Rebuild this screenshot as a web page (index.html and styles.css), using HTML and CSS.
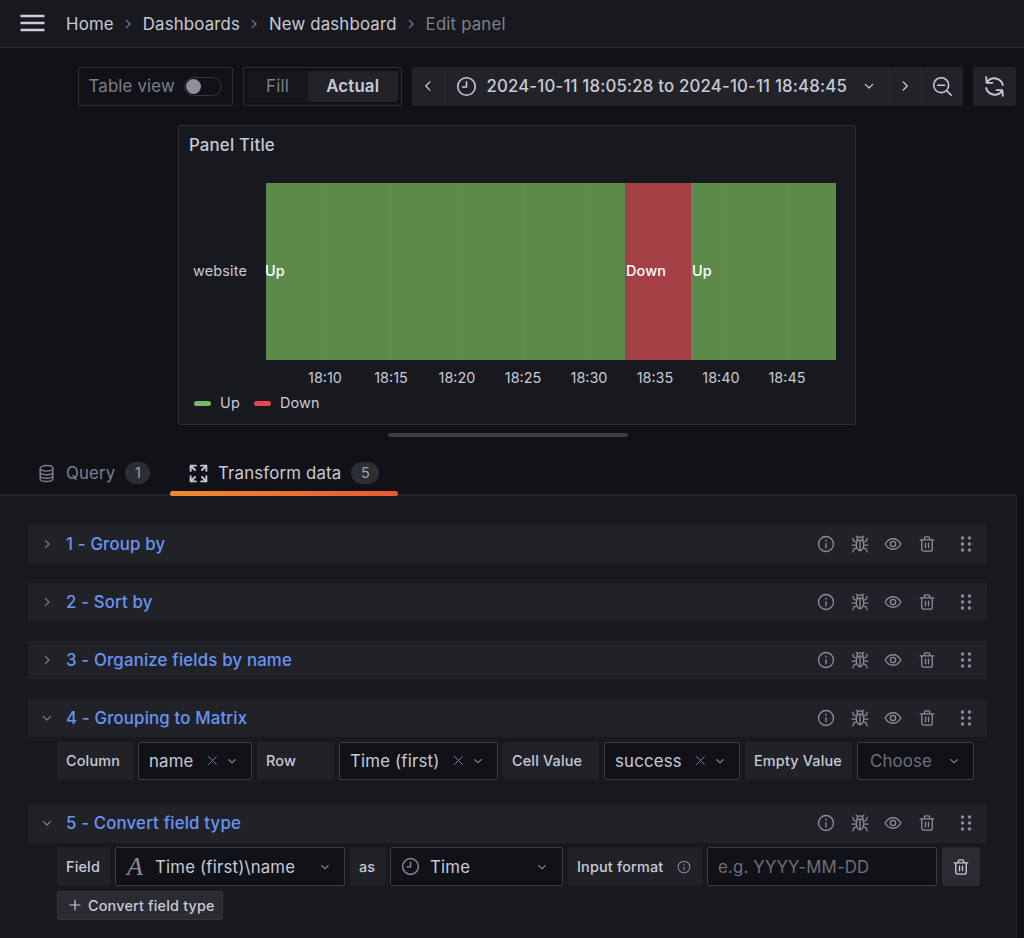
FILE: index.html
```html
<!DOCTYPE html>
<html lang="en">
  <head>
    <meta charset="UTF-8" />
    <title>Edit panel</title>
    <link rel="stylesheet" href="styles.css">
  </head>
  <body>
    <svg class="sprite" width="0" height="0">
      <symbol id="i-info" viewBox="0 0 24 24"><circle cx="12" cy="12" r="10"/><path d="M12 11.500v5.500M12 7v1"/></symbol>
      <symbol id="i-bug" viewBox="0 0 24 24"><path d="M7 13c0-3.500 2-6.500 5-6.500s5 3 5 6.500-2 8-5 8-5-4.500-5-8zM8 8V6.500a4 4 0 0 1 8 0V8M12 7v14M8.500 3 7 1.500M15.500 3 17 1.500M7.500 10 3.500 8 2.500 4.500M16.500 10l4-2 1-3.500M7 13.500H1.500M17 13.500h5.500M7.500 17l-3.500 1.500L2.500 22.500M16.500 17l3.500 1.500 1.500 4"/></symbol>
      <symbol id="i-eye" viewBox="0 0 24 24"><path d="M1.500 12C4 7.500 7.500 5 12 5s8 2.500 10.500 7C20 16.500 16.500 19 12 19S4 16.500 1.500 12z"/><circle cx="12" cy="12" r="3.500"/></symbol>
      <symbol id="i-trash" viewBox="0 0 24 24"><path d="M3 6.500h18M8.500 6.500V4a1.500 1.500 0 0 1 1.500-1.500h4A1.500 1.500 0 0 1 15.500 4v2.500M5 6.500V19a2.500 2.500 0 0 0 2.500 2.500h9A2.500 2.500 0 0 0 19 19V6.500M10 11v6M14 11v6"/></symbol>
      <symbol id="i-chev-down" viewBox="0 0 24 24"><path d="M6.500 9.500 12 15l5.500-5.500"/></symbol>
      <symbol id="i-chev-right" viewBox="0 0 24 24"><path d="M9.500 6.500 15 12l-5.500 5.500"/></symbol>
      <symbol id="i-chev-left" viewBox="0 0 24 24"><path d="M14.500 6.500 9 12l5.500 5.500"/></symbol>
      <symbol id="i-x" viewBox="0 0 24 24"><path d="M5.500 5.500l13 13M18.500 5.500l-13 13"/></symbol>
      <symbol id="i-clock" viewBox="0 0 24 24"><circle cx="12" cy="12" r="10"/><path d="M12 6.500V12.500H7.500"/></symbol>
      <symbol id="i-grip" viewBox="0 0 12 16"><circle cx="2.500" cy="2" r="1.700"/><circle cx="9.500" cy="2" r="1.700"/><circle cx="2.500" cy="8" r="1.700"/><circle cx="9.500" cy="8" r="1.700"/><circle cx="2.500" cy="14" r="1.700"/><circle cx="9.500" cy="14" r="1.700"/></symbol>
    </svg>

    <header class="topbar">
      <svg class="burger" viewBox="0 0 24 18"><path d="M0 2h24M0 9h24M0 16h24"/></svg>
      <nav class="crumbs">
        <span>Home</span>
        <svg class="ico crumb-sep"><use href="#i-chev-right"/></svg>
        <span>Dashboards</span>
        <svg class="ico crumb-sep"><use href="#i-chev-right"/></svg>
        <span>New dashboard</span>
        <svg class="ico crumb-sep"><use href="#i-chev-right"/></svg>
        <span class="crumb-current">Edit panel</span>
      </nav>
    </header>

    <div class="toolbar">
      <div class="table-view">
        <span>Table view</span>
        <span class="switch"><span class="knob"></span></span>
      </div>
      <div class="radio">
        <span class="radio-opt">Fill</span>
        <span class="radio-opt radio-on">Actual</span>
      </div>
      <div class="time-group">
        <span class="time-btn time-arrow"><svg class="ico ico-18"><use href="#i-chev-left"/></svg></span>
        <span class="time-btn time-range">
          <svg class="ico ico-clock"><use href="#i-clock"/></svg>
          <span class="time-text">2024-10-11 18:05:28 to 2024-10-11 18:48:45</span>
          <svg class="ico ico-16"><use href="#i-chev-down"/></svg>
        </span>
        <span class="time-btn time-arrow"><svg class="ico ico-18"><use href="#i-chev-right"/></svg></span>
        <span class="time-btn time-zoom">
          <svg class="ico" viewBox="0 0 24 24"><circle cx="10.500" cy="10.500" r="8.500"/><path d="M6.500 10.500h8M17 17l5 5"/></svg>
        </span>
      </div>
      <span class="refresh">
        <svg class="ico" viewBox="0 0 24 24"><path d="M20 10.500A8.500 8.500 0 0 0 5 7.500M4 3l.5 5.500H10M4 13.500a8.500 8.500 0 0 0 15 3M20 21l-.5-5.500H14"/></svg>
      </span>
    </div>

    <section class="panel">
      <h2 class="panel-title">Panel Title</h2>
      <div class="chart">
        <div class="series-name">website</div>
        <div class="plot">
          <div class="seg seg-up seg-a">Up</div>
          <div class="seg seg-down seg-b">Down</div>
          <div class="seg seg-up seg-c">Up</div>
        </div>
      </div>
      <div class="ticks">
        <span>18:10</span><span>18:15</span><span>18:20</span><span>18:25</span><span>18:30</span><span>18:35</span><span>18:40</span><span>18:45</span>
      </div>
      <div class="legend">
        <i class="swatch swatch-up"></i><span>Up</span>
        <i class="swatch swatch-down"></i><span>Down</span>
      </div>
    </section>

    <div class="handle"></div>

    <div class="tabs">
      <div class="tab tab-query">
        <svg class="ico ico-db" viewBox="0 0 24 24"><ellipse cx="12" cy="5.500" rx="8" ry="3.500"/><path d="M4 5.500v13c0 2 3.600 3.500 8 3.500s8-1.500 8-3.500v-13M4 10c0 2 3.600 3.500 8 3.500s8-1.500 8-3.500M4 14.500c0 2 3.600 3.500 8 3.500s8-1.500 8-3.500"/></svg>
        <span>Query</span>
        <span class="count">1</span>
      </div>
      <div class="tab tab-active">
        <svg class="ico ico-process" viewBox="0 0 24 24"><path d="M3 9V3h6M3 3l5 5M15 3h6v6M21 3l-5 5M21 15v6h-6M21 21l-5-5M9 21H3v-6M3 21l5-5"/></svg>
        <span>Transform data</span>
        <span class="count">5</span>
      </div>
    </div>

    <main class="pane">
      <div class="row">
        <div class="row-head">
          <svg class="ico ico-16 row-chev"><use href="#i-chev-right"/></svg>
          <span class="row-title">1 - Group by</span>
          <div class="row-actions">
            <svg class="ico ico-18"><use href="#i-info"/></svg>
            <svg class="ico ico-18"><use href="#i-bug"/></svg>
            <svg class="ico ico-18"><use href="#i-eye"/></svg>
            <svg class="ico ico-18"><use href="#i-trash"/></svg>
            <svg class="grip"><use href="#i-grip"/></svg>
          </div>
        </div>
      </div>

      <div class="row">
        <div class="row-head">
          <svg class="ico ico-16 row-chev"><use href="#i-chev-right"/></svg>
          <span class="row-title">2 - Sort by</span>
          <div class="row-actions">
            <svg class="ico ico-18"><use href="#i-info"/></svg>
            <svg class="ico ico-18"><use href="#i-bug"/></svg>
            <svg class="ico ico-18"><use href="#i-eye"/></svg>
            <svg class="ico ico-18"><use href="#i-trash"/></svg>
            <svg class="grip"><use href="#i-grip"/></svg>
          </div>
        </div>
      </div>

      <div class="row">
        <div class="row-head">
          <svg class="ico ico-16 row-chev"><use href="#i-chev-right"/></svg>
          <span class="row-title">3 - Organize fields by name</span>
          <div class="row-actions">
            <svg class="ico ico-18"><use href="#i-info"/></svg>
            <svg class="ico ico-18"><use href="#i-bug"/></svg>
            <svg class="ico ico-18"><use href="#i-eye"/></svg>
            <svg class="ico ico-18"><use href="#i-trash"/></svg>
            <svg class="grip"><use href="#i-grip"/></svg>
          </div>
        </div>
      </div>

      <div class="row row-open">
        <div class="row-head">
          <svg class="ico ico-16 row-chev"><use href="#i-chev-down"/></svg>
          <span class="row-title">4 - Grouping to Matrix</span>
          <div class="row-actions">
            <svg class="ico ico-18"><use href="#i-info"/></svg>
            <svg class="ico ico-18"><use href="#i-bug"/></svg>
            <svg class="ico ico-18"><use href="#i-eye"/></svg>
            <svg class="ico ico-18"><use href="#i-trash"/></svg>
            <svg class="grip"><use href="#i-grip"/></svg>
          </div>
        </div>
        <div class="fields">
          <span class="lbl w-column">Column</span>
          <span class="sel w-name"><span class="sel-val">name</span><svg class="ico ico-x"><use href="#i-x"/></svg><svg class="ico ico-14"><use href="#i-chev-down"/></svg></span>
          <span class="lbl w-rowlbl">Row</span>
          <span class="sel w-time"><span class="sel-val">Time (first)</span><svg class="ico ico-x"><use href="#i-x"/></svg><svg class="ico ico-14"><use href="#i-chev-down"/></svg></span>
          <span class="lbl w-cell">Cell Value</span>
          <span class="sel w-success"><span class="sel-val">success</span><svg class="ico ico-x"><use href="#i-x"/></svg><svg class="ico ico-14"><use href="#i-chev-down"/></svg></span>
          <span class="lbl w-empty">Empty Value</span>
          <span class="sel w-choose"><span class="sel-val sel-ph">Choose</span><svg class="ico ico-14"><use href="#i-chev-down"/></svg></span>
        </div>
      </div>

      <div class="row row-open">
        <div class="row-head">
          <svg class="ico ico-16 row-chev"><use href="#i-chev-down"/></svg>
          <span class="row-title">5 - Convert field type</span>
          <div class="row-actions">
            <svg class="ico ico-18"><use href="#i-info"/></svg>
            <svg class="ico ico-18"><use href="#i-bug"/></svg>
            <svg class="ico ico-18"><use href="#i-eye"/></svg>
            <svg class="ico ico-18"><use href="#i-trash"/></svg>
            <svg class="grip"><use href="#i-grip"/></svg>
          </div>
        </div>
        <div class="fields">
          <span class="lbl w-field">Field</span>
          <span class="sel w-fieldsel"><span class="type-a">A</span><span class="sel-val">Time (first)\name</span><svg class="ico ico-14"><use href="#i-chev-down"/></svg></span>
          <span class="lbl w-as">as</span>
          <span class="sel w-type"><svg class="ico ico-type"><use href="#i-clock"/></svg><span class="sel-val">Time</span><svg class="ico ico-14"><use href="#i-chev-down"/></svg></span>
          <span class="lbl w-format">Input format<svg class="ico ico-14 lbl-info"><use href="#i-info"/></svg></span>
          <span class="sel w-input"><span class="sel-val sel-ph">e.g. YYYY-MM-DD</span></span>
          <span class="del-btn"><svg class="ico ico-18"><use href="#i-trash"/></svg></span>
        </div>
        <div class="add-btn">
          <svg class="ico ico-12" viewBox="0 0 24 24"><path d="M12 2v20M2 12h20"/></svg>
          <span>Convert field type</span>
        </div>
      </div>
    </main>
  </body>
</html>
```

FILE: styles.css
```css
* {
  box-sizing: border-box;
}
html,
body {
  height: 938px;
  overflow: hidden;
}
body {
  margin: 0;
  background: #111217;
  color: #ccccdc;
  font-family: Inter, "Noto Sans", sans-serif;
  font-size: 16.8px;
  letter-spacing: 0.01071em;
}
.sprite {
  display: block;
  height: 0;
}
.ico {
  width: 18px;
  height: 18px;
  fill: none;
  stroke: currentColor;
  stroke-width: 1.8;
  stroke-linecap: round;
  stroke-linejoin: round;
  flex: none;
}
.ico-12 {
  width: 12px;
  height: 12px;
  stroke-width: 2.4;
}
.ico-14 {
  width: 14px;
  height: 14px;
}
.ico-16 {
  width: 16px;
  height: 16px;
}
.ico-18 {
  width: 18px;
  height: 18px;
}
.ico-clock {
  width: 21px;
  height: 21px;
}
.ico-type {
  width: 19px;
  height: 19px;
}
.ico-db {
  width: 19px;
  height: 19px;
}
.ico-process {
  width: 21px;
  height: 21px;
  stroke-width: 2.2;
}

.topbar {
  height: 48px;
  background: #17191e;
  border-bottom: 1px solid #2a2c32;
  display: flex;
  align-items: center;
  padding-left: 20px;
}
.burger {
  width: 25px;
  height: 18px;
  fill: none;
  stroke: #ccccdc;
  stroke-width: 2.4;
  margin-top: -1px;
}
.crumbs {
  display: flex;
  align-items: center;
  margin-left: 21px;
  color: #c9c9d6;
}
.crumb-sep {
  width: 16px;
  height: 16px;
  margin: 0 6.500px;
  color: #7e7e8c;
}
.crumb-current {
  color: #7e7f8b;
}

.toolbar {
  display: flex;
  align-items: stretch;
  height: 38.4px;
  margin: 19.2px 0 0 77.5px;
}
.table-view {
  width: 155.500px;
  display: flex;
  align-items: center;
  padding-left: 10px;
  border: 1px solid #2d2f35;
  border-radius: 2px;
  color: #7e7f8b;
}
.switch {
  width: 38px;
  height: 19px;
  margin-left: 9px;
  border: 1px solid #35373d;
  border-radius: 10px;
  display: flex;
  align-items: center;
  padding-left: 1px;
}
.knob {
  width: 15px;
  height: 15px;
  border-radius: 50%;
  background: #8f8f9c;
}
.radio {
  width: 158.500px;
  margin-left: 10px;
  padding: 3px;
  display: flex;
  border: 1px solid #2d2f35;
  border-radius: 2px;
  color: #7e7f8b;
}
.radio-opt {
  flex: 1;
  display: flex;
  align-items: center;
  justify-content: center;
  background: #15171b;
}
.radio-opt:first-child {
  flex: none;
  width: 61px;
}
.radio-on {
  background: #212329;
  color: #c9c9d6;
  font-weight: 600;
  border-radius: 2px;
}
.time-group {
  display: flex;
  margin-left: 10.500px;
  width: 550.500px;
  background: #212329;
  border-radius: 2px;
  color: #c9c9d6;
}
.time-btn {
  display: flex;
  align-items: center;
  justify-content: center;
  border-left: 1px solid #2a2c32;
}
.time-btn:first-child {
  border-left: 0;
}
.time-arrow {
  width: 32.400px;
}
.time-range {
  flex: 1;
  justify-content: flex-start;
  padding-left: 10.500px;
  font-weight: 500;
}
.time-text {
  margin: 0 14px 0 9.500px;
  white-space: nowrap;
}
.time-zoom {
  width: 41.600px;
}
.refresh {
  width: 43px;
  margin-left: 10.400px;
  background: #212329;
  border-radius: 2px;
  display: flex;
  align-items: center;
  justify-content: center;
  color: #c9c9d6;
}
.refresh .ico {
  width: 25px;
  height: 25px;
}
.time-zoom .ico {
  width: 21px;
  height: 21px;
}

.panel {
  width: 678px;
  height: 300px;
  margin: 19.700px 0 0 178px;
  background: #17191e;
  border: 1px solid #2c2e34;
  border-radius: 2px;
}
.panel-title {
  margin: 0;
  padding: 9px 10px 0;
  height: 57px;
  font-size: 16.8px;
  line-height: 20px;
  font-weight: 500;
  color: #c9c9d6;
}
.chart {
  display: flex;
  align-items: center;
}
.series-name {
  width: 87px;
  text-align: right;
  padding-right: 19px;
  font-size: 14.4px;
  color: #c9c9d6;
  padding-bottom: 2px;
}
.plot {
  width: 570px;
  height: 177px;
  display: flex;
}
.seg {
  display: flex;
  align-items: center;
  padding-bottom: 2px;
  font-size: 14.4px;
  font-weight: 500;
  color: #fff;
  white-space: nowrap;
}
.seg-up {
  background-color: #5c8a4b;
  background-image: linear-gradient(90deg, rgba(255, 255, 255, 0.03) 1px, transparent 1px);
  background-size: 66px 100%;
  background-position: 59px 0;
}
.seg-down {
  background: #a44045;
  padding-left: 1px;
}
.seg-a {
  width: 359px;
  text-indent: -1px;
}
.seg-b {
  width: 66px;
}
.seg-c {
  width: 145px;
  padding-left: 1px;
  background-position: 30px 0;
}
.ticks {
  display: flex;
  margin: 9px 0 0 113px;
  font-size: 14.4px;
  line-height: 18px;
  letter-spacing: 0;
  color: #c9c9d6;
}
.ticks span {
  width: 66px;
  text-align: center;
}
.legend {
  display: flex;
  align-items: center;
  margin: 7px 0 0 15px;
  font-size: 14.4px;
  line-height: 18px;
  color: #c9c9d6;
}
.swatch {
  width: 17px;
  height: 5px;
  border-radius: 3px;
  margin-right: 9px;
}
.swatch-up {
  background: #73bf69;
}
.swatch-down {
  background: #e5484f;
  margin-left: 14px;
}

.handle {
  width: 240px;
  height: 4px;
  margin: 8px 0 0 388px;
  border-radius: 2px;
  background: #3a3c42;
}

.tabs {
  display: flex;
  height: 59px;
  padding-left: 30px;
  border-bottom: 2px solid #24262c;
  width: 1016px;
}
.tab {
  display: flex;
  align-items: center;
  height: 59px;
  padding: 13px 8px 0 7px;
  color: #7e7f8b;
}
.tab > span:first-of-type {
  margin-left: 10px;
}
.tab-query {
  width: 140px;
}
.tab-active {
  color: #c9c9d6;
  width: 228px;
  padding-left: 18px;
  position: relative;
}
.tab-active > span:first-of-type {
  margin-left: 9px;
}
.tab-active::after {
  content: "";
  position: absolute;
  left: 0;
  right: 0;
  bottom: 0;
  height: 5px;
  border-radius: 3px;
  background: linear-gradient(90deg, #f08a2c, #e55a35);
}
.count {
  margin-left: 10px;
  height: 22px;
  min-width: 25px;
  padding: 0 8px;
  border-radius: 11px;
  background: #2c2e34;
  color: #a0a0ad;
  font-size: 14.4px;
  line-height: 22px;
  text-align: center;
}
.tab-active .count {
  min-width: 28px;
}

.pane {
  width: 1017px;
  height: 444px;
  padding: 29px 29px 0 28px;
  background: #17191e;
  border-right: 1px solid #24262c;
}
.row {
  margin-bottom: 19.400px;
}
.row-head {
  height: 38.400px;
  display: flex;
  align-items: center;
  padding-left: 11px;
  background: #202228;
  border-radius: 2px;
}
.row-chev {
  color: #7e7f8b;
}
.row-title {
  margin-left: 11px;
  font-weight: 500;
  color: #6a94f5;
}
.row-actions {
  margin-left: auto;
  display: flex;
  align-items: center;
  gap: 15.600px;
  padding-right: 15px;
  color: #8b8b98;
}
.grip {
  width: 12px;
  height: 16px;
  margin-left: 8.500px;
  fill: #8b8b98;
}
.row-open {
  margin-bottom: 0;
}
.fields {
  display: flex;
  gap: 5px;
  margin: 4.800px 0 0 29px;
  height: 38.400px;
}
.row-open + .row-open {
  margin-top: 24px;
}
.lbl {
  display: flex;
  align-items: center;
  padding-left: 9px;
  background: #202228;
  border-radius: 2px;
  font-size: 14.4px;
  font-weight: 500;
  color: #c9c9d6;
  white-space: nowrap;
}
.sel {
  display: flex;
  align-items: center;
  padding: 0 12px 0 10px;
  background: #111217;
  border: 1px solid #3a3c42;
  border-radius: 2px;
  color: #c9c9d6;
}
.sel-val {
  flex: 1;
  white-space: nowrap;
}
.sel-ph {
  color: #6e6f7a;
}
.ico-x {
  width: 15px;
  height: 15px;
  color: #7e7f8b;
  margin-right: 5px;
  stroke-width: 1.6;
}
.sel .ico-14 {
  color: #9a9aa6;
}
.w-column { width: 76px; }
.w-name { width: 114px; }
.w-rowlbl { width: 77px; }
.w-time { width: 159px; }
.w-cell { width: 96px; }
.w-success { width: 136px; }
.w-empty { width: 107px; }
.w-choose { width: 117px; padding-left: 12px; }
.w-field { width: 53px; }
.w-fieldsel { width: 230px; padding-left: 11px; }
.w-as { width: 35px; }
.w-type { width: 173px; padding-left: 10px; padding-right: 13px; color: #c9c9d6; }
.w-type .ico-type { color: #8b8b98; }
.w-type .sel-val { margin-left: 10px; }
.w-format { width: 134px; }
.w-input { width: 230px; }
.type-a {
  width: 28px;
  flex: none;
  font-family: "Liberation Serif", serif;
  font-style: italic;
  font-size: 26px;
  line-height: 1;
  letter-spacing: 0;
  color: #8b8b98;
}
.lbl-info {
  margin-left: 14px;
  color: #8b8b98;
}
.del-btn {
  width: 38px;
  display: flex;
  align-items: center;
  justify-content: center;
  background: #2a2c32;
  border-radius: 2px;
  color: #c9c9d6;
}
.add-btn {
  display: flex;
  align-items: center;
  width: 166px;
  height: 28.800px;
  margin: 5px 0 0 29px;
  padding-left: 11px;
  background: #2a2c32;
  border: 1px solid #33353b;
  border-radius: 2px;
  font-size: 14.4px;
  font-weight: 500;
  color: #c9c9d6;
}
.add-btn span {
  margin-left: 7px;
  white-space: nowrap;
}
```
